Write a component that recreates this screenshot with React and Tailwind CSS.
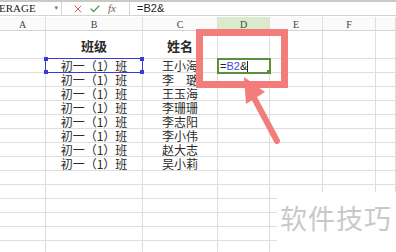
import { X, Check } from "lucide-react";

const COLS = ["A", "B", "C", "D", "E", "F", ""];
const GRID = "grid grid-cols-[46px_97px_75px_52px_53px_53px_1fr]";

const NAMES = ["王小海", "李\u3000璐", "王玉海", "李珊珊", "李志阳", "李小伟", "赵大志", "吴小莉"];

const cjk = { fontFamily: '"Noto Sans CJK SC", "Noto Sans", sans-serif' };
const serif = { fontFamily: '"Liberation Serif", "DejaVu Serif", serif' };

const Row = ({ height, children }) => (
  <div className={`${GRID} ${height} border-b border-[#dedede]`}>{children}</div>
);

const Cell = ({ children, className = "" }) => (
  <div className={`border-r border-[#dedede] flex items-center justify-center text-[12px] leading-none text-[#2a2a2a] ${className}`}>
    {children}
  </div>
);

export default function App() {
  const rows = [];
  for (let i = 0; i < 14; i++) {
    rows.push(i < NAMES.length ? { cls: "初一（1）班", name: NAMES[i] } : null);
  }

  return (
    <div className="relative w-[396px] h-[252px] overflow-hidden bg-white" style={cjk}>
      {/* formula bar */}
      <div className="flex h-[16px] border-t-2 border-[#c9c9c9] border-b border-b-[#d4d4d4] bg-white">
        <div className="w-[62px] flex items-center justify-between pr-[3px] border-r border-[#d4d4d4] text-[11px] text-[#222]" style={serif}>
          <span className="-ml-[1px]">ERAGE</span>
          <span className="text-[7px] text-[#777]">▾</span>
        </div>
        <div className="w-[68px] flex items-center gap-[5px] pl-[10px] border-r border-[#d4d4d4]">
          <X className="size-[12px] text-[#e05a5a]" strokeWidth={2} />
          <Check className="size-[12px] text-[#4aa04a]" strokeWidth={2.5} />
          <span className="ml-[2px] text-[11px] italic text-[#666]" style={serif}>fx</span>
        </div>
        <div className="flex items-center pl-[7px] text-[11px] text-[#222]" style={{ fontFamily: '"Liberation Sans", sans-serif' }}>
          =B2&amp;
        </div>
      </div>

      {/* column headers */}
      <div className={`${GRID} h-[14px] mt-[1px] border-b border-[#d4d4d4] bg-[#fafafa]`}>
        {COLS.map((c, i) => (
          <div
            key={i}
            className={`border-r border-[#dedede] flex items-center justify-center text-[10px] text-[#444] ${c === "D" ? "bg-[#d9ebcb]" : ""}`}
            style={serif}
          >
            {c}
          </div>
        ))}
      </div>

      {/* title row */}
      <Row height="h-[28px]">
        <Cell />
        <Cell className="font-bold text-[13px] pt-[2px]">班级</Cell>
        <Cell className="font-bold text-[13px] pt-[2px]">姓名</Cell>
        <Cell />
        <Cell />
        <Cell />
        <Cell />
      </Row>

      {rows.map((r, i) => (
        <Row key={i} height="h-[14px]">
          <Cell />
          <Cell className={i === 0 ? "relative" : ""}>
            {r ? r.cls : ""}
            {i === 0 && (
              <div className="absolute -inset-[1px] border border-[#3a3ad6]">
                <span className="absolute -left-[2px] -top-[2px] size-[4px] bg-[#3a3ad6]" />
                <span className="absolute -right-[2px] -top-[2px] size-[4px] bg-[#3a3ad6]" />
                <span className="absolute -left-[2px] -bottom-[2px] size-[4px] bg-[#3a3ad6]" />
                <span className="absolute -right-[2px] -bottom-[2px] size-[4px] bg-[#3a3ad6]" />
              </div>
            )}
          </Cell>
          <Cell>{r ? r.name : ""}</Cell>
          <Cell className={i === 0 ? "relative justify-start" : ""}>
            {i === 0 && (
              <div className="absolute -left-[1px] -top-[1px] w-[54px] h-[16px] border-2 border-[#5b8f3c] flex items-center pl-[1px] text-[11px]" style={{ fontFamily: '"Liberation Sans", sans-serif' }}>
                <span className="text-[#222]">=</span>
                <span className="text-[#4646e0]">B2</span>
                <span className="text-[#222]">&amp;</span>
                <span className="w-px h-[11px] bg-[#222]" />
                <span className="absolute -right-[2px] -bottom-[2px] size-[4px] bg-[#5b8f3c]" />
              </div>
            )}
          </Cell>
          <Cell />
          <Cell />
          <Cell />
        </Row>
      ))}

      {/* red highlight box */}
      <div className="absolute left-[196px] top-[29px] w-[92px] h-[59px] border-[7px] border-[#f27d7b]" />

      {/* arrow */}
      <svg className="absolute inset-0" width="396" height="252" viewBox="0 0 396 252">
        <line x1="277" y1="141" x2="252" y2="94" stroke="#f27d7b" strokeWidth="6" strokeLinecap="round" />
        <polygon points="244,77 265,92 246,104" fill="#f27d7b" />
      </svg>

      {/* watermark */}
      <div className="absolute left-[277px] top-[192px] right-0 bottom-0 bg-white flex items-start pt-[12px] pl-[3px]">
        <span className="text-[27px] leading-none text-[#c9c9c9] tracking-[1px]">软件技巧</span>
      </div>
    </div>
  );
}
